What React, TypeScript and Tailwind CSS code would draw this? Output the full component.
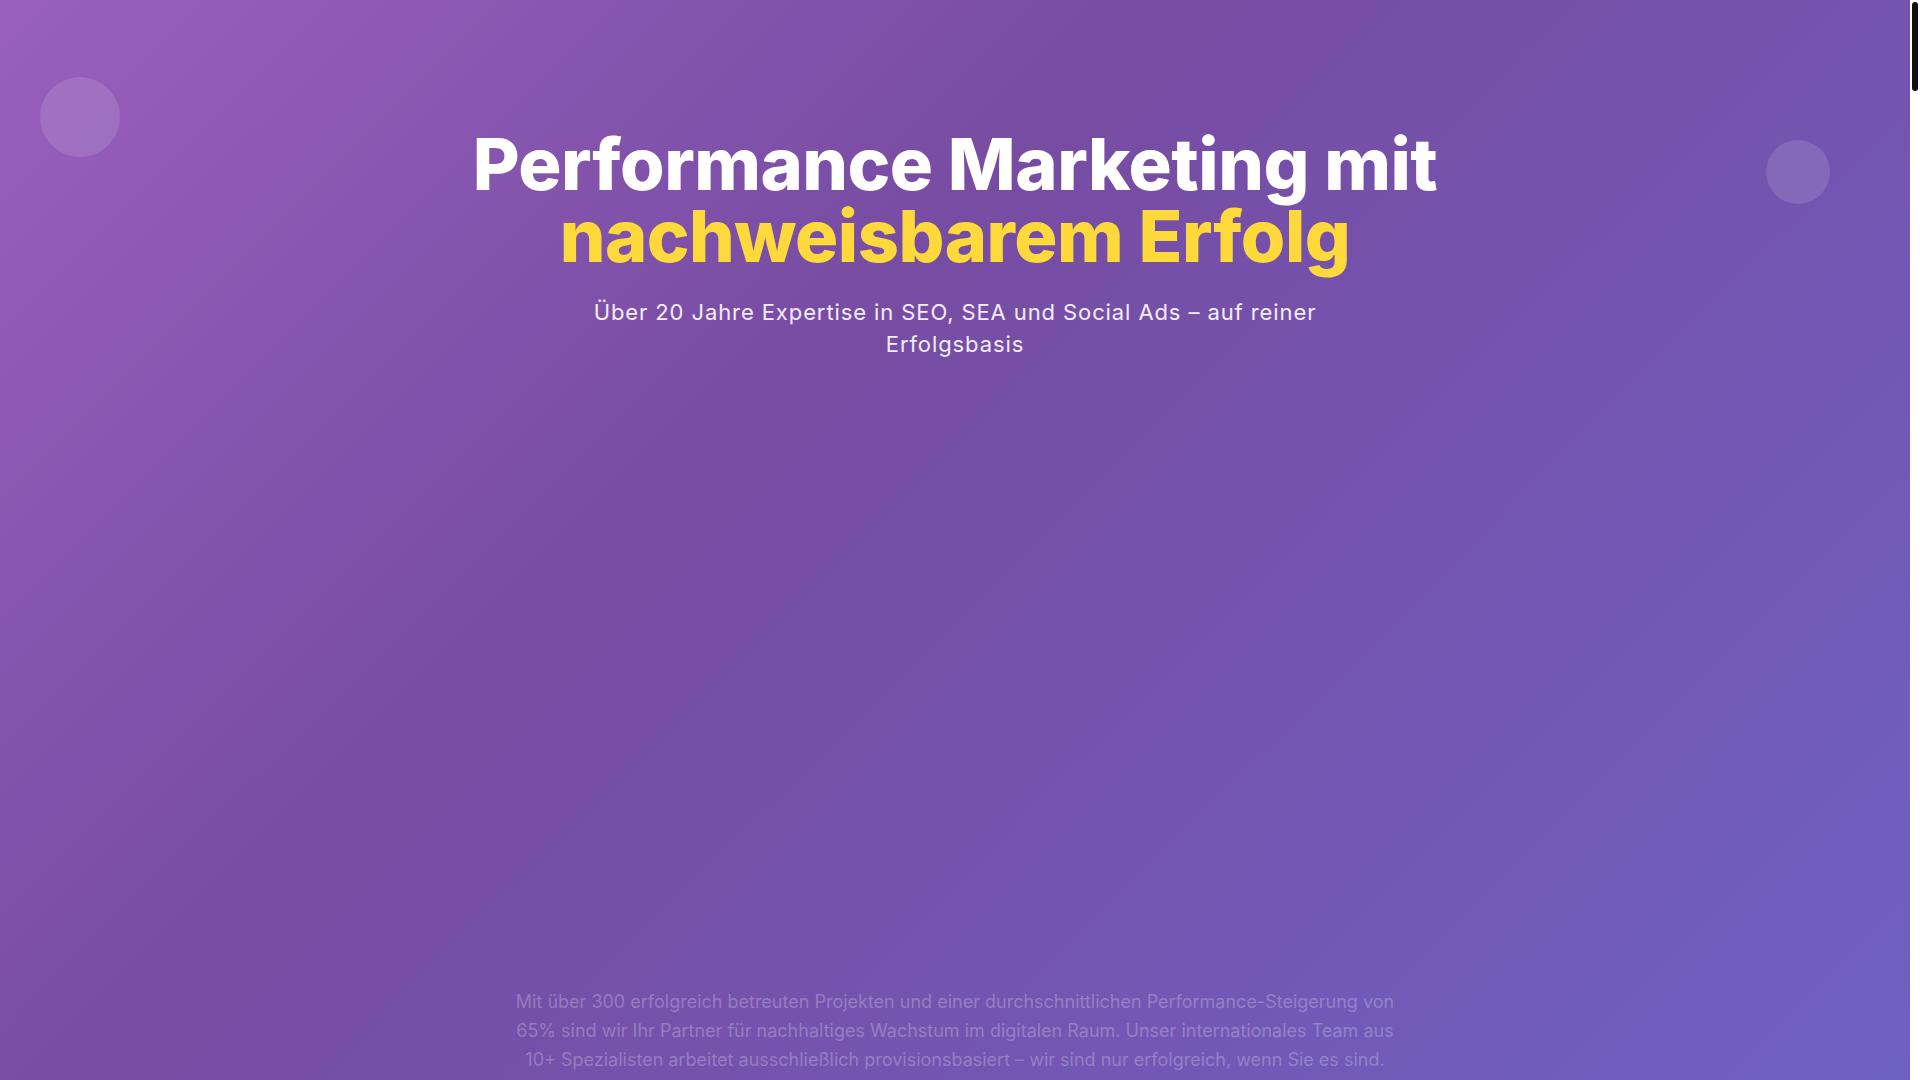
import React from 'react';

export default function App() {
  return (
    <div className="flex h-screen bg-white font-['Inter','Noto_Sans',sans-serif]">
      <main className="flex-1 overflow-y-auto [scrollbar-width:none]">
        {/* Hero */}
        <section className="relative overflow-hidden bg-[linear-gradient(135deg,#9960bd_0%,#774ca3_38%,#6e62c4_100%)]">
          <div className="absolute left-[40px] top-[77px] h-20 w-20 rounded-full bg-white/[0.12]" />
          <div className="absolute right-[80px] top-[140px] h-16 w-16 rounded-full bg-white/[0.12]" />

          <div className="relative mx-auto flex flex-col items-center px-6 pt-[128px] pb-[126px] text-center">
            <h1 className="text-7xl font-extrabold leading-none tracking-[-0.5px] text-white">
              Performance Marketing mit
              <br />
              <span className="text-[#fdd93b]">nachweisbarem Erfolg</span>
            </h1>
            <p className="mt-6 max-w-3xl text-[22px] leading-[32px] tracking-[0.9px] text-white/90">
              Über 20 Jahre Expertise in SEO, SEA und Social Ads – auf reiner Erfolgsbasis
            </p>

            {/* CTA + stats area (not yet faded in) */}
            <div className="h-[628px]" />

            <p className="max-w-[900px] text-lg leading-[1.6] text-white/25">
              Mit über 300 erfolgreich betreuten Projekten und einer durchschnittlichen Performance-Steigerung von
              65% sind wir Ihr Partner für nachhaltiges Wachstum im digitalen Raum. Unser internationales Team aus
              10+ Spezialisten arbeitet ausschließlich provisionsbasiert – wir sind nur erfolgreich, wenn Sie es sind.
            </p>
          </div>
        </section>

        {/* rest of the page */}
        <div className="h-[11600px] bg-white" />
      </main>

      {/* scrollbar */}
      <aside className="w-[10px] shrink-0 bg-white pt-[2px]">
        <div className="mx-auto h-[89px] w-[6px] rounded-full bg-[#111]" />
      </aside>
    </div>
  );
}
